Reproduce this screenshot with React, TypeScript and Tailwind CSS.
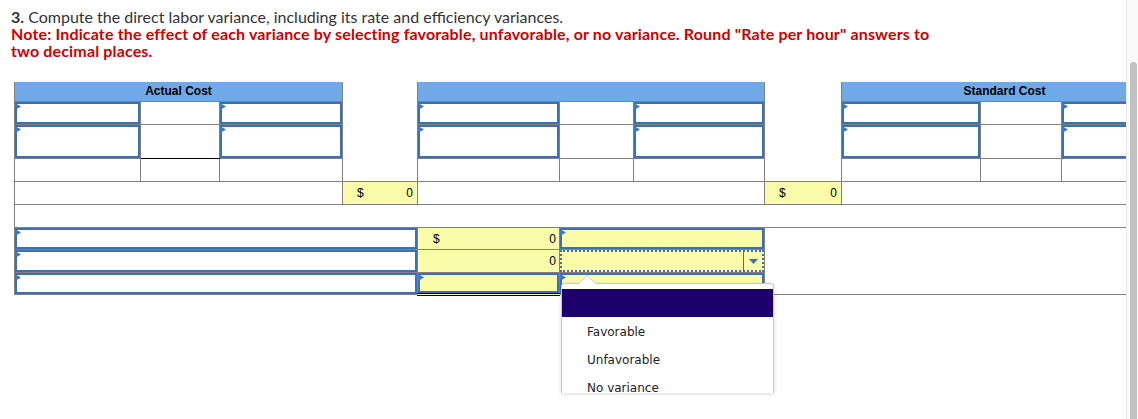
import React from 'react';

const gray = 'border border-[#808080] p-0 align-top';

function Flag() {
  return (
    <svg className="absolute left-[-2px] top-[-1px]" width="6" height="7" viewBox="0 0 6 7">
      <polygon points="0,0 6,3.5 0,7" fill="#3d78c8" />
    </svg>
  );
}

function InputBox({ h, yellow = false }: { h: string; yellow?: boolean }) {
  return (
    <div className={`relative border-2 border-[#3b70b6] ${h} ${yellow ? 'bg-[#fbfca9]' : 'bg-white'}`}>
      <Flag />
    </div>
  );
}

function Money({ dollar = true, h = 'h-[22px]' }: { dollar?: boolean; h?: string }) {
  return (
    <div className={`flex items-center justify-between pl-[14px] pr-[4px] ${h}`}>
      <span>{dollar ? '$' : ''}</span>
      <span>0</span>
    </div>
  );
}

export default function App() {
  return (
    <div className="flex h-[419px] w-[1138px] overflow-hidden bg-white">
      <div className="h-full w-[1126px] overflow-hidden">
        <div className="px-[11px] pt-[8px] font-['Lato','Open_Sans',sans-serif] text-[16px] leading-[17px]">
          <p className="text-[#333]">
            <span className="font-bold">3.</span> Compute the direct labor variance, including its rate and efficiency variances.
          </p>
          <p className="font-bold tracking-[0.15px] text-[#cc0000]">
            Note: Indicate the effect of each variance by selecting favorable, unfavorable, or no variance. Round "Rate per hour" answers to
            <br />
            two decimal places.
          </p>
        </div>

        <div className="relative mt-[23px] pl-[14px]">
          <table className="w-[1153px] table-fixed border-collapse font-['Liberation_Sans',Arial,sans-serif] text-[12px] text-black">
            <colgroup>
              <col className="w-[126px]" />
              <col className="w-[79px]" />
              <col className="w-[123px]" />
              <col className="w-[75px]" />
              <col className="w-[142px]" />
              <col className="w-[74px]" />
              <col className="w-[131px]" />
              <col className="w-[77px]" />
              <col className="w-[139px]" />
              <col className="w-[81px]" />
              <col className="w-[106px]" />
            </colgroup>
            <tbody>
              <tr>
                <td colSpan={3} className={`${gray} border-t-0 bg-[#6fa9e7]`}>
                  <div className="flex h-[19px] items-start justify-center font-bold">Actual Cost</div>
                </td>
                <td className="border-0 p-0" />
                <td colSpan={3} className={`${gray} border-t-0 bg-[#6fa9e7]`}>
                  <div className="h-[19px]" />
                </td>
                <td className="border-0 p-0" />
                <td colSpan={3} className={`${gray} border-t-0 bg-[#6fa9e7]`}>
                  <div className="flex h-[19px] items-start justify-center font-bold">Standard Cost</div>
                </td>
              </tr>

              <tr>
                <td className={gray}><InputBox h="h-[22px]" /></td>
                <td className={gray}><div className="h-[22px]" /></td>
                <td className={gray}><InputBox h="h-[22px]" /></td>
                <td className="border-0 p-0" />
                <td className={gray}><InputBox h="h-[22px]" /></td>
                <td className={gray}><div className="h-[22px]" /></td>
                <td className={gray}><InputBox h="h-[22px]" /></td>
                <td className="border-0 p-0" />
                <td className={gray}><InputBox h="h-[22px]" /></td>
                <td className={gray}><div className="h-[22px]" /></td>
                <td className={gray}><InputBox h="h-[22px]" /></td>
              </tr>

              <tr>
                <td className={gray}><InputBox h="h-[33px]" /></td>
                <td className={`${gray} border-b-black`}><div className="h-[33px]" /></td>
                <td className={gray}><InputBox h="h-[33px]" /></td>
                <td className="border-0 p-0" />
                <td className={gray}><InputBox h="h-[33px]" /></td>
                <td className={gray}><div className="h-[33px]" /></td>
                <td className={gray}><InputBox h="h-[33px]" /></td>
                <td className="border-0 p-0" />
                <td className={gray}><InputBox h="h-[33px]" /></td>
                <td className={gray}><div className="h-[33px]" /></td>
                <td className={gray}><InputBox h="h-[33px]" /></td>
              </tr>

              <tr>
                <td className={gray}><div className="h-[22px]" /></td>
                <td className={gray}><div className="h-[22px]" /></td>
                <td className={gray}><div className="h-[22px]" /></td>
                <td className="border-0 p-0" />
                <td className={gray}><div className="h-[22px]" /></td>
                <td className={gray}><div className="h-[22px]" /></td>
                <td className={gray}><div className="h-[22px]" /></td>
                <td className="border-0 p-0" />
                <td className={gray}><div className="h-[22px]" /></td>
                <td className={gray}><div className="h-[22px]" /></td>
                <td className={gray}><div className="h-[22px]" /></td>
              </tr>

              <tr>
                <td colSpan={3} className={gray}><div className="h-[22px]" /></td>
                <td className={`${gray} bg-[#fbfca9]`}><Money /></td>
                <td colSpan={3} className={gray}><div className="h-[22px]" /></td>
                <td className={`${gray} bg-[#fbfca9]`}><Money /></td>
                <td colSpan={3} className={gray}><div className="h-[22px]" /></td>
              </tr>

              <tr>
                <td colSpan={11} className={gray}><div className="h-[22px]" /></td>
              </tr>

              <tr>
                <td colSpan={4} className={gray}><InputBox h="h-[21px]" /></td>
                <td className={`${gray} bg-[#fbfca9]`}>
                  <div className="flex h-[21px] items-center justify-between pl-[15px] pr-[3px]">
                    <span>$</span>
                    <span>0</span>
                  </div>
                </td>
                <td colSpan={2} className={gray}><InputBox h="h-[21px]" yellow /></td>
                <td colSpan={4} rowSpan={3} className={gray} />
              </tr>

              <tr>
                <td colSpan={4} className={gray}><InputBox h="h-[22px]" /></td>
                <td className={`${gray} bg-[#fbfca9]`}>
                  <div className="flex h-[22px] items-center justify-end pr-[3px]">0</div>
                </td>
                <td colSpan={2} className={gray}>
                  <div className="flex h-[22px] border-2 border-dotted border-[#3b70b6] bg-[#fbfca9]">
                    <div className="flex-1" />
                    <div className="flex w-[19px] items-center justify-center border-l border-solid border-[#3b70b6]">
                      <svg width="9" height="5" viewBox="0 0 9 5">
                        <polygon points="0,0 9,0 4.5,5" fill="#3b70b6" />
                      </svg>
                    </div>
                  </div>
                </td>
              </tr>

              <tr>
                <td colSpan={4} className={gray}><InputBox h="h-[21px]" /></td>
                <td className={`${gray} border-b-[3px] border-double border-b-black bg-[#fbfca9]`}>
                  <InputBox h="h-[20px]" yellow />
                </td>
                <td colSpan={2} className={gray}><InputBox h="h-[21px]" yellow /></td>
              </tr>
            </tbody>
          </table>

          <div className="absolute left-[561px] top-[193px] z-10 w-[213px]">
            <svg className="absolute left-[17px] top-0 z-20" width="18" height="9" viewBox="0 0 18 9">
              <polygon points="0,9 9,0.5 18,9" fill="white" stroke="#c8c8c8" strokeWidth="1" />
              <rect x="1" y="8" width="16" height="2" fill="white" />
            </svg>
            <div className="mt-[8px] h-[110px] overflow-hidden rounded-t-[4px] border border-b-0 border-[#c8c8c8] bg-white shadow-[0_1px_4px_rgba(0,0,0,0.15)] font-['DejaVu_Sans',Verdana,sans-serif] text-[12px] text-[#222]">
              <div className="mt-[5px] h-[28px] bg-[#1d006b]" />
              <div className="flex h-[28px] items-center pl-[25px] pt-[1px]">Favorable</div>
              <div className="flex h-[28px] items-center pl-[25px] pt-[1px]">Unfavorable</div>
              <div className="flex h-[28px] items-center pl-[25px] pt-[1px]">No variance</div>
            </div>
          </div>
        </div>
      </div>

      <div className="flex h-full w-[12px] flex-col border-l border-[#e8e8e8] bg-[#fafafa] pl-[3px] pr-[1px]">
        <div className="h-[62px] shrink-0" />
        <div className="flex-1 rounded-t-full bg-[#c1c1c1]" />
      </div>
    </div>
  );
}
